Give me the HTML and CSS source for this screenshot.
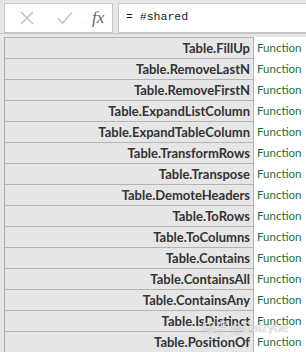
FILE: index.html
```html
<!DOCTYPE html>
<html lang="en">
<head>
    <meta charset="UTF-8">
    <meta name="viewport" content="width=device-width, initial-scale=1.0">
    <title>#shared</title>
    <link rel="stylesheet" href="styles.css">
</head>
<body>
    <div class="formula-bar">
        <div class="formula-buttons">
            <svg class="btn-icon" width="14" height="14" viewBox="0 0 14 14">
                <path d="M1 1 L13 13 M13 1 L1 13" stroke="#c4c4c4" stroke-width="1.6" fill="none"/>
            </svg>
            <svg class="btn-icon" width="16" height="14" viewBox="0 0 16 14">
                <path d="M1 7.5 L5.5 12 L15 1.5" stroke="#c4c4c4" stroke-width="1.6" fill="none"/>
            </svg>
            <span class="fx">fx</span>
        </div>
        <div class="formula-input">= #shared</div>
    </div>

    <div class="grid">
        <div class="row"><div class="name">Table.FillUp</div><div class="value">Function</div></div>
        <div class="row"><div class="name">Table.RemoveLastN</div><div class="value">Function</div></div>
        <div class="row"><div class="name">Table.RemoveFirstN</div><div class="value">Function</div></div>
        <div class="row"><div class="name">Table.ExpandListColumn</div><div class="value">Function</div></div>
        <div class="row"><div class="name">Table.ExpandTableColumn</div><div class="value">Function</div></div>
        <div class="row"><div class="name">Table.TransformRows</div><div class="value">Function</div></div>
        <div class="row"><div class="name">Table.Transpose</div><div class="value">Function</div></div>
        <div class="row"><div class="name">Table.DemoteHeaders</div><div class="value">Function</div></div>
        <div class="row"><div class="name">Table.ToRows</div><div class="value">Function</div></div>
        <div class="row"><div class="name">Table.ToColumns</div><div class="value">Function</div></div>
        <div class="row"><div class="name">Table.Contains</div><div class="value">Function</div></div>
        <div class="row"><div class="name">Table.ContainsAll</div><div class="value">Function</div></div>
        <div class="row"><div class="name">Table.ContainsAny</div><div class="value">Function</div></div>
        <div class="row"><div class="name">Table.IsDistinct</div><div class="value">Function</div></div>
        <div class="row"><div class="name">Table.PositionOf</div><div class="value">Function</div></div>
        <div class="watermark">知乎 @Daizyue</div>
    </div>
</body>
</html>
```

FILE: styles.css
```css
body {
    margin: 0;
    background: #e6e6e6;
    font-family: Lato, "Noto Sans CJK SC", sans-serif;
    overflow: hidden;
}

.formula-bar {
    display: flex;
    gap: 5px;
    padding: 3px 0 0 4px;
    height: 34px;
    box-sizing: border-box;
    border-bottom: 1px solid #c8c8c8;
}

.formula-buttons {
    width: 109px;
    height: 30px;
    box-sizing: border-box;
    background: #fff;
    border: 1px solid #c6c6c6;
    display: flex;
    align-items: center;
    padding-left: 15px;
}

.btn-icon {
    margin-right: 23px;
}

.fx {
    font-family: "Liberation Serif", serif;
    font-style: italic;
    font-size: 17px;
    color: #666;
    margin-left: -4px;
}

.formula-input {
    flex: 1;
    height: 30px;
    box-sizing: border-box;
    background: #fff;
    border: 1px solid #c6c6c6;
    border-right: none;
    font-family: "Liberation Mono", monospace;
    font-size: 11.5px;
    color: #222;
    line-height: 26px;
    padding-left: 7px;
}

.grid {
    position: relative;
    margin: 3px 0 0 4px;
    border-left: 1px solid #ababab;
}

.row {
    display: flex;
    height: 21px;
}

.name {
    width: 249px;
    box-sizing: border-box;
    border-top: 1px solid #b4b4b4;
    border-right: 1px solid #b4b4b4;
    text-align: right;
    padding-right: 3px;
    font-weight: bold;
    font-size: 13px;
    line-height: 20px;
    color: #333;
}

.value {
    flex: 1;
    background: #fff;
    font-size: 11.5px;
    line-height: 21px;
    color: #1f6f3a;
    padding-left: 3px;
}

.watermark {
    position: absolute;
    left: 197px;
    top: 281px;
    font-size: 13px;
    line-height: 19px;
    color: rgba(255, 255, 255, 0.8);
    text-shadow: 0 0 1px rgba(100, 100, 100, 0.7);
}
```
